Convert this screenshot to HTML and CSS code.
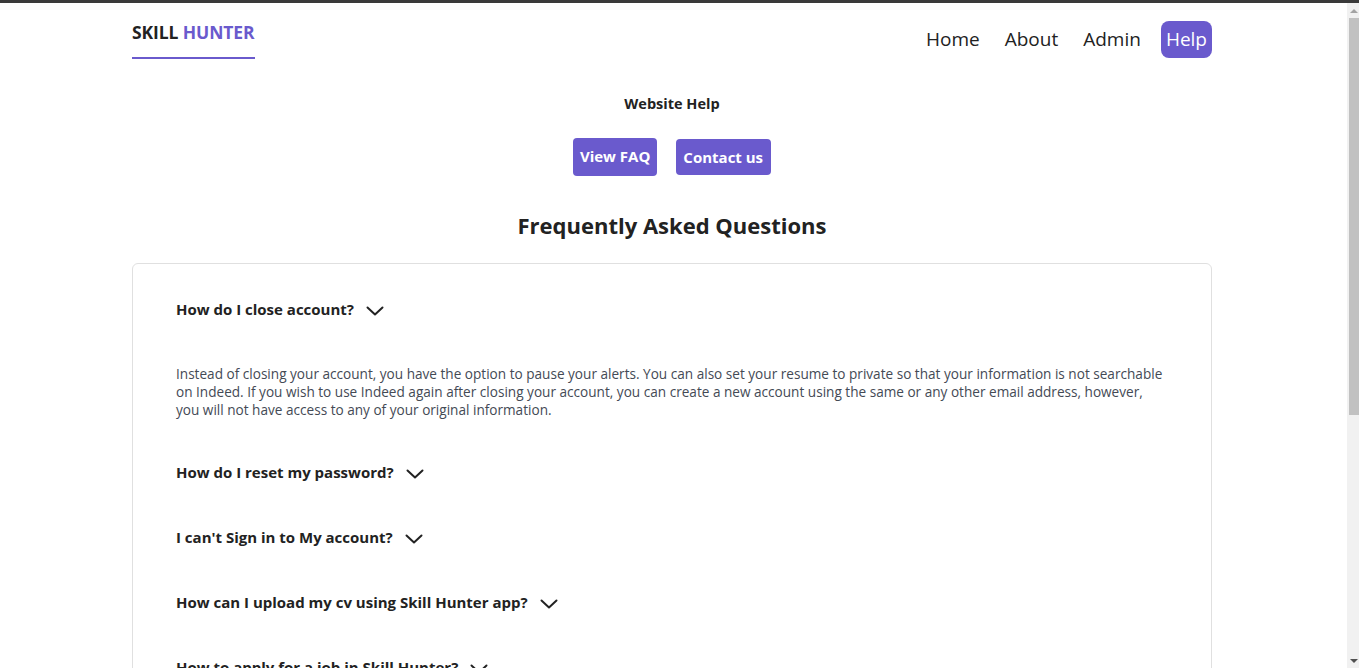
FILE: index.html
```html
<!DOCTYPE html>
<html lang="en">
<head>
<meta charset="utf-8">
<title>Skill Hunter - Help</title>
<link rel="stylesheet" href="styles.css">
</head>
<body>
<div class="topline"></div>
<div class="container">
  <header class="header">
    <a class="logo" href="#"><span class="logo-dark">SKILL</span> <span class="logo-accent">HUNTER</span></a>
    <nav class="nav">
      <a class="nav-link" href="#">Home</a>
      <a class="nav-link" href="#">About</a>
      <a class="nav-link" href="#">Admin</a>
      <a class="nav-link nav-active" href="#">Help</a>
    </nav>
  </header>

  <section class="help">
    <h2 class="help-title">Website Help</h2>
    <div class="help-buttons">
      <a class="btn btn-faq" href="#">View FAQ</a>
      <a class="btn btn-contact" href="#">Contact us</a>
    </div>
  </section>

  <h1 class="faq-title">Frequently Asked Questions</h1>

  <div class="faq-card">
    <div class="faq-item open">
      <div class="faq-q">How do I close account?
        <svg class="chev" width="18" height="10" viewBox="0 0 18 10"><path d="M1.5 1.5 L9 8.5 L16.5 1.5" fill="none" stroke="#222" stroke-width="2" stroke-linecap="round" stroke-linejoin="round"/></svg>
      </div>
      <p class="faq-a">Instead of closing your account, you have the option to pause your alerts. You can also set your resume to private so that your information is not searchable on Indeed. If you wish to use Indeed again after closing your account, you can create a new account using the same or any other email address, however, you will not have access to any of your original information.</p>
    </div>
    <div class="faq-item">
      <div class="faq-q">How do I reset my password?
        <svg class="chev" width="18" height="10" viewBox="0 0 18 10"><path d="M1.5 1.5 L9 8.5 L16.5 1.5" fill="none" stroke="#222" stroke-width="2" stroke-linecap="round" stroke-linejoin="round"/></svg>
      </div>
    </div>
    <div class="faq-item">
      <div class="faq-q">I can't Sign in to My account?
        <svg class="chev" width="18" height="10" viewBox="0 0 18 10"><path d="M1.5 1.5 L9 8.5 L16.5 1.5" fill="none" stroke="#222" stroke-width="2" stroke-linecap="round" stroke-linejoin="round"/></svg>
      </div>
    </div>
    <div class="faq-item">
      <div class="faq-q">How can I upload my cv using Skill Hunter app?
        <svg class="chev" width="18" height="10" viewBox="0 0 18 10"><path d="M1.5 1.5 L9 8.5 L16.5 1.5" fill="none" stroke="#222" stroke-width="2" stroke-linecap="round" stroke-linejoin="round"/></svg>
      </div>
    </div>
    <div class="faq-item">
      <div class="faq-q">How to apply for a job in Skill Hunter?
        <svg class="chev" width="18" height="10" viewBox="0 0 18 10"><path d="M1.5 1.5 L9 8.5 L16.5 1.5" fill="none" stroke="#222" stroke-width="2" stroke-linecap="round" stroke-linejoin="round"/></svg>
      </div>
    </div>
    <div class="faq-item">
      <div class="faq-q">Can I edit my profile after registration?
        <svg class="chev" width="18" height="10" viewBox="0 0 18 10"><path d="M1.5 1.5 L9 8.5 L16.5 1.5" fill="none" stroke="#222" stroke-width="2" stroke-linecap="round" stroke-linejoin="round"/></svg>
      </div>
    </div>
  </div>
</div>
<div class="scrollbar" aria-hidden="true">
  <div class="sb-btn"><span class="sb-up"></span></div>
  <div class="sb-thumb"></div>
  <div class="sb-space"></div>
  <div class="sb-btn"><span class="sb-down"></span></div>
</div>
</body>
</html>
```
FILE: styles.css
```css
* { box-sizing: border-box; }
html, body { margin: 0; padding: 0; }
body {
  font-family: "Open Sans", "Noto Sans", sans-serif;
  color: #222;
  background: #fff;
  padding-right: 15px;
}
.topline {
  position: fixed;
  top: 0;
  left: 0;
  right: 0;
  height: 3px;
  background: #3a3a3a;
  z-index: 2;
}
.container {
  width: 1080px;
  margin: 0 auto;
  padding-top: 3px;
  padding-bottom: 60px;
}
a { text-decoration: none; }
.header {
  display: flex;
  justify-content: space-between;
  align-items: flex-start;
  padding-top: 18px;
}
.logo {
  display: block;
  font-size: 17.5px;
  font-weight: 700;
  line-height: 22px;
  padding-bottom: 14px;
  border-bottom: 2px solid #6a5acd;
  letter-spacing: -0.1px;
}
.logo-dark { color: #222; }
.logo-accent { color: #6a5acd; }
.nav {
  display: flex;
  align-items: center;
  gap: 25px;
}
.nav-link {
  font-size: 19px;
  color: #222;
  line-height: 37px;
  height: 37px;
}
.nav-active {
  background: #6a5acd;
  color: #fff;
  padding: 0 5px;
  border-radius: 8px;
  margin-left: -5px;
}
.help { text-align: center; }
.help-title {
  font-size: 14.5px;
  font-weight: 700;
  margin: 36px 0 0;
  line-height: 18px;
}
.help-buttons {
  display: flex;
  justify-content: center;
  align-items: center;
  gap: 19px;
  margin-top: 25px;
}
.btn {
  background: #6a5acd;
  color: #fff;
  font-weight: 700;
  font-size: 15px;
  border-radius: 4px;
  display: flex;
  align-items: center;
}
.btn-faq { height: 38px; padding: 0 6.5px 3px; }
.btn-contact { height: 36px; padding: 0 7.5px; }
.faq-title {
  text-align: center;
  font-size: 22px;
  font-weight: 700;
  margin: 34px 0 0;
  line-height: 30px;
}
.faq-card {
  margin-top: 23px;
  border: 1px solid #e0e0e0;
  border-radius: 6px;
  padding: 36px 43px 0;
}
.faq-item {
  padding: 0 0 46px;
}
.faq-item.open { padding-bottom: 44px; }
.faq-q {
  display: flex;
  align-items: center;
  gap: 12px;
  font-size: 15px;
  font-weight: 700;
  line-height: 19px;
  color: #222;
}
.chev { display: block; margin-top: 2px; }
.faq-a {
  margin: 46px 0 0;
  font-size: 13.6px;
  line-height: 18px;
  color: #444a55;
}

/* browser scrollbar as seen in the screenshot */
.scrollbar {
  position: fixed;
  top: 3px;
  right: 0;
  bottom: 0;
  width: 12px;
  background: #f1f1f1;
  display: flex;
  flex-direction: column;
}
.sb-btn {
  height: 15px;
  display: flex;
  align-items: center;
  justify-content: center;
  padding-left: 2px;
}
.sb-up {
  width: 0;
  height: 0;
  border-left: 4px solid transparent;
  border-right: 4px solid transparent;
  border-bottom: 4px solid #a3a3a3;
}
.sb-down {
  width: 0;
  height: 0;
  border-left: 4px solid transparent;
  border-right: 4px solid transparent;
  border-top: 4px solid #505050;
}
.sb-thumb {
  height: 397px;
  margin-left: 2px;
  background: #c1c1c1;
}
.sb-space { flex: 1; }
```
